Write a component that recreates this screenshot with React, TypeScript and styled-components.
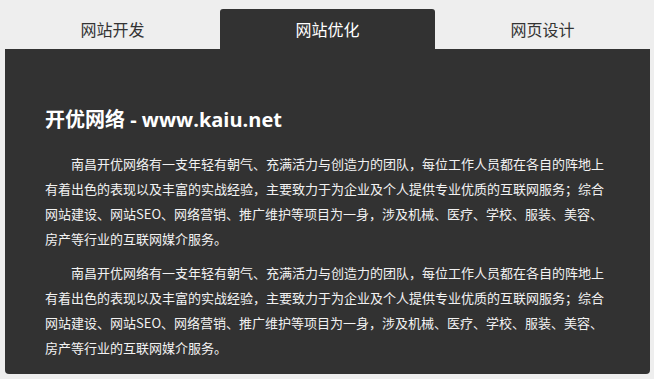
import React, { useState } from "react";
import styled, { createGlobalStyle } from "styled-components";

const GlobalStyle = createGlobalStyle`
  html, body {
    margin: 0;
    padding: 0;
    background: #eeeeee;
  }
  body {
    font-family: "Noto Sans CJK SC", "Noto Sans", sans-serif;
  }
`;

const Page = styled.div`
  width: 654px;
  height: 379px;
  padding: 9px 4px 0 5px;
  box-sizing: border-box;
`;

const TabBar = styled.div`
  display: grid;
  grid-template-columns: repeat(3, 215px);
  height: 40px;
`;

const Tab = styled.div<{ active: boolean }>`
  display: flex;
  align-items: center;
  justify-content: center;
  font-size: 16px;
  color: ${({ active }) => (active ? "#fff" : "#333")};
  background: ${({ active }) => (active ? "#323232" : "transparent")};
  border-radius: 3px 3px 0 0;
  cursor: pointer;
`;

const Panel = styled.div`
  width: 645px;
  box-sizing: border-box;
  background: #323232;
  border-radius: 0 0 4px 4px;
  padding: 56px 47px 14px 40px;
  color: #f2f2f2;
`;

const Title = styled.h2`
  margin: 0 0 16px;
  font-family: "Open Sans", "Noto Sans CJK SC", sans-serif;
  font-size: 20px;
  line-height: 30px;
  font-weight: 700;
  color: #fff;
`;

const Paragraph = styled.div`
  font-size: 13px;
  line-height: 25px;
  margin-bottom: 9px;

  &:last-child {
    margin-bottom: 0;
  }
`;

const Line = styled.span<{ first?: boolean; last?: boolean }>`
  display: block;
  white-space: nowrap;
  text-align: justify;
  text-align-last: ${({ last }) => (last ? "left" : "justify")};
  text-indent: ${({ first }) => (first ? "2em" : "0")};
`;

const tabs = ["网站开发", "网站优化", "网页设计"];

const lines = [
  "南昌开优网络有一支年轻有朝气、充满活力与创造力的团队，每位工作人员都在各自的阵地上",
  "有着出色的表现以及丰富的实战经验，主要致力于为企业及个人提供专业优质的互联网服务；综合",
  "网站建设、网站SEO、网络营销、推广维护等项目为一身，涉及机械、医疗、学校、服装、美容、",
  "房产等行业的互联网媒介服务。",
];

const Intro = () => (
  <Paragraph>
    {lines.map((text, i) => (
      <Line key={i} first={i === 0} last={i === lines.length - 1}>
        {text}
      </Line>
    ))}
  </Paragraph>
);

export default function App() {
  const [current, setCurrent] = useState(1);
  return (
    <Page>
      <GlobalStyle />
      <TabBar>
        {tabs.map((name, i) => (
          <Tab key={name} active={i === current} onClick={() => setCurrent(i)}>
            {name}
          </Tab>
        ))}
      </TabBar>
      <Panel>
        <Title>开优网络 - www.kaiu.net</Title>
        <Intro />
        <Intro />
      </Panel>
    </Page>
  );
}
